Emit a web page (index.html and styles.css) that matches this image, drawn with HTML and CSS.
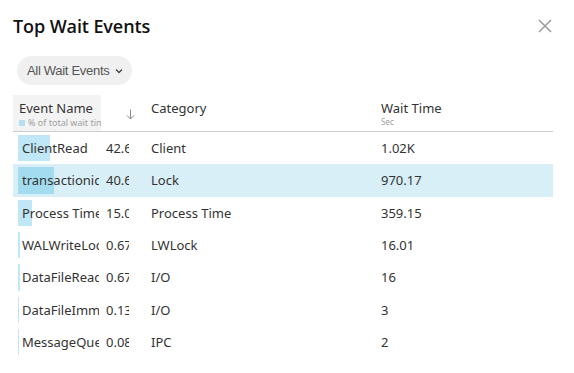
FILE: index.html
```
<!DOCTYPE html>
<html>
<head>
<meta charset="utf-8">
<link rel="stylesheet" href="styles.css">
</head>
<body>
<div class="panel">
  <div class="titlebar">
    <h1 class="title">Top Wait Events</h1>
    <svg class="close" width="14" height="14" viewBox="0 0 14 14"><path d="M1 1 L13 13 M13 1 L1 13" stroke="#9a9a9a" stroke-width="1.5" fill="none"/></svg>
  </div>
  <div class="filters">
    <div class="pill">All Wait Events <svg class="chev" width="8" height="6" viewBox="0 0 8 6"><path d="M1 1.5 L4 4.5 L7 1.5" stroke="#444" stroke-width="1.3" fill="none"/></svg></div>
  </div>
  <div class="table">
    <div class="thead">
      <div class="c-name h-name">
        <div class="h-title">Event Name</div>
        <div class="h-sub"><span class="sq"></span>% of total wait time</div>
      </div>
      <div class="c-pct h-pct"><svg width="9" height="11" viewBox="0 0 9 11"><path d="M4.5 0.5 V10 M1 6.5 L4.5 10 L8 6.5" stroke="#888" stroke-width="1" fill="none"/></svg></div>
      <div class="c-cat h-cell">Category</div>
      <div class="c-time h-cell">Wait Time<div class="h-unit">Sec</div></div>
    </div>
    <div class="row">
      <div class="c-name"><span class="bar" style="width:32px"></span><span class="nm">ClientRead</span></div>
      <div class="c-pct"><span class="pv">42.6%</span></div>
      <div class="c-cat">Client</div>
      <div class="c-time">1.02K</div>
    </div>
    <div class="row sel">
      <div class="c-name"><span class="bar" style="width:36px"></span><span class="nm">transactionid</span></div>
      <div class="c-pct"><span class="pv">40.6%</span></div>
      <div class="c-cat">Lock</div>
      <div class="c-time">970.17</div>
    </div>
    <div class="row">
      <div class="c-name"><span class="bar" style="width:14px"></span><span class="nm">Process Time</span></div>
      <div class="c-pct"><span class="pv">15.0%</span></div>
      <div class="c-cat">Process Time</div>
      <div class="c-time">359.15</div>
    </div>
    <div class="row">
      <div class="c-name"><span class="bar" style="width:1.5px"></span><span class="nm">WALWriteLock</span></div>
      <div class="c-pct"><span class="pv">0.67%</span></div>
      <div class="c-cat">LWLock</div>
      <div class="c-time">16.01</div>
    </div>
    <div class="row">
      <div class="c-name"><span class="bar" style="width:1.5px"></span><span class="nm">DataFileRead</span></div>
      <div class="c-pct"><span class="pv">0.67%</span></div>
      <div class="c-cat">I/O</div>
      <div class="c-time">16</div>
    </div>
    <div class="row">
      <div class="c-name"><span class="bar" style="width:1px"></span><span class="nm">DataFileImmediateSync</span></div>
      <div class="c-pct"><span class="pv">0.13%</span></div>
      <div class="c-cat">I/O</div>
      <div class="c-time">3</div>
    </div>
    <div class="row">
      <div class="c-name"><span class="bar" style="width:1px"></span><span class="nm">MessageQueueReceive</span></div>
      <div class="c-pct"><span class="pv">0.08%</span></div>
      <div class="c-cat">IPC</div>
      <div class="c-time">2</div>
    </div>
  </div>
</div>
</body>
</html>
```
FILE: styles.css
```
* { box-sizing: border-box; }
html, body { margin: 0; padding: 0; background: #fff; }
body { font-family: "Noto Sans", "Open Sans", sans-serif; color: #333; }
.panel { width: 574px; height: 373px; padding: 0 21px 0 13px; overflow: hidden; }
.titlebar { display: flex; justify-content: space-between; align-items: center; height: 50px; padding-top: 1px; }
.title { margin: 0; font-family: "Open Sans", "Noto Sans", sans-serif; font-size: 18px; font-weight: 600; color: #111; letter-spacing: -0.1px; }
.close { margin-right: 1px; }
.filters { padding: 6px 0 0 4px; height: 45px; }
.pill { display: inline-flex; align-items: center; gap: 6px; height: 29px; padding: 0 9px 0 10px; border-radius: 15px; background: #f0f0f0; font-family: "Liberation Sans", Arial, sans-serif; font-size: 13px; letter-spacing: -0.3px; color: #555; white-space: nowrap; }
.chev { margin-top: 1px; }
.table { width: 540px; }
.thead { display: flex; height: 37px; border-bottom: 1px solid #cfcfcf; }
.c-name { width: 88px; flex: none; position: relative; }
.c-pct { width: 44px; flex: none; padding-left: 5px; }
.c-cat { width: 230px; flex: none; padding-left: 6px; }
.c-time { flex: 1; padding-left: 6px; }
.thead .h-name { background: #f3f3f3; padding: 4px 0 0 6px; overflow: hidden; white-space: nowrap; }
.h-title { font-size: 13px; line-height: 18px; color: #333; }
.h-sub { font-size: 9px; line-height: 11px; color: #a0a0a0; display: flex; align-items: center; }
.sq { width: 6px; height: 6px; background: #b4e1f1; margin-right: 3px; display: inline-block; flex: none; }
.thead .h-pct { padding: 8px 0 0 25px; }
.h-cell { padding-top: 4px; font-size: 13px; line-height: 18px; color: #333; }
.h-unit { font-size: 8px; line-height: 10px; color: #a0a0a0; }
.row { display: flex; align-items: center; height: 32.33px; font-size: 13px; color: #333; }
.row.sel { background: #d8eff8; }
.row .c-name { height: 100%; display: flex; align-items: center; padding-left: 9px; white-space: nowrap; overflow: hidden; }
.bar { position: absolute; left: 5px; top: 3px; bottom: 3px; background: #c0e7f5; }
.row.sel .bar { background: #a4dcef; }
.nm { position: relative; display: block; width: 77px; overflow: hidden; white-space: nowrap; }
.pv { display: block; width: 23px; overflow: hidden; white-space: nowrap; }
```
